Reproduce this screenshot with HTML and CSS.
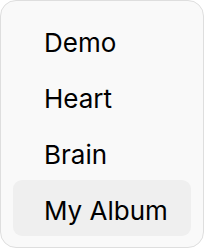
FILE: index.html
```html
<!DOCTYPE html>
<html lang="en">
<head>
    <meta charset="UTF-8">
    <meta name="viewport" content="width=device-width, initial-scale=1.0">
    <title>Menu</title>
    <link rel="stylesheet" href="styles.css">
</head>
<body>
    <div class="menu">
        <div class="menu-item">Demo</div>
        <div class="menu-item">Heart</div>
        <div class="menu-item">Brain</div>
        <div class="menu-item active">My Album</div>
    </div>
</body>
</html>
```

FILE: styles.css
```css
body, html {
    margin: 0;
    background-color: white;
    font-family: Inter, "Noto Sans", sans-serif;
}
.menu {
    width: 204px;
    box-sizing: border-box;
    padding: 11px 12px;
    background-color: #f9f9f9;
    border: 1px solid #dedede;
    border-radius: 16px;
    display: flex;
    flex-direction: column;
}
.menu-item {
    height: 56px;
    display: flex;
    align-items: center;
    padding-left: 31px;
    padding-top: 5px;
    box-sizing: border-box;
    font-size: 26px;
    color: #000;
    border-radius: 9px;
}
.menu-item.active {
    background-color: #efefef;
}
```
